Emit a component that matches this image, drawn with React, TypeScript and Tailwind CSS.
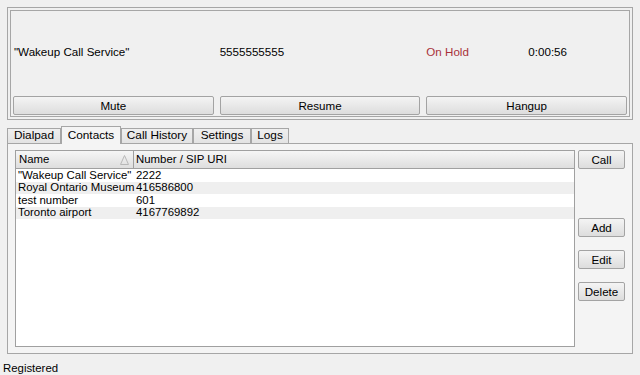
const CONTACTS = [
  { name: '"Wakeup Call Service"', number: "2222" },
  { name: "Royal Ontario Museum", number: "416586800" },
  { name: "test number", number: "601" },
  { name: "Toronto airport", number: "4167769892" },
];

const TABS = [
  { label: "Dialpad", w: "w-[54px]" },
  { label: "Contacts", w: "w-[60px]", active: true },
  { label: "Call History", w: "w-[72px]" },
  { label: "Settings", w: "w-[58px]" },
  { label: "Logs", w: "w-[38px]" },
];

function Btn({ children, className = "" }: { children: React.ReactNode; className?: string }) {
  return (
    <button
      className={
        "h-[19px] flex items-center justify-center border border-[#a3a3a3] rounded-[2px] bg-gradient-to-b from-[#f4f4f4] to-[#dddddd] text-[11.6px] leading-none text-black " +
        className
      }
    >
      {children}
    </button>
  );
}

export default function App() {
  return (
    <div className="w-[640px] h-[375px] bg-[#f0f0f0] flex flex-col font-['Liberation_Sans',Arial,sans-serif] text-[11.4px] text-black overflow-hidden">
      {/* Active call panel */}
      <div className="ml-[7px] mt-[7px] w-[626px] h-[113px] border border-[#a6a6a6] p-[2px] shrink-0">
        <div className="h-full border border-[#a6a6a6] flex flex-col px-[2px] pb-[1px]">
          <div className="grid grid-cols-3 gap-[6px] mt-[33px] leading-[15px] text-[11.6px]">
            <div className="pl-[1px]">"Wakeup Call Service"</div>
            <div>5555555555</div>
            <div className="flex">
              <div className="w-[102px] text-[#a8303a]">On Hold</div>
              <div>0:00:56</div>
            </div>
          </div>
          <div className="grid grid-cols-3 gap-[6px] mt-auto">
            <Btn>Mute</Btn>
            <Btn>Resume</Btn>
            <Btn>Hangup</Btn>
          </div>
        </div>
      </div>

      {/* Tabs */}
      <div className="ml-[7px] mt-[6px] h-[17px] flex items-end shrink-0 relative z-10 text-[11.8px]">
        {TABS.map((t) =>
          t.active ? (
            <div
              key={t.label}
              className={`${t.w} h-[18px] -mb-[1px] border border-b-0 border-[#a6a6a6] bg-[#f4f4f4] flex items-center justify-center leading-none`}
            >
              {t.label}
            </div>
          ) : (
            <div
              key={t.label}
              className={`${t.w} h-[15px] border border-b-0 border-[#a6a6a6] bg-gradient-to-b from-[#efefef] to-[#e3e3e3] flex items-center justify-center leading-none`}
            >
              {t.label}
            </div>
          )
        )}
      </div>

      {/* Tab pane */}
      <div className="ml-[7px] w-[626px] h-[211px] border border-[#a6a6a6] bg-[#f4f4f4] flex pl-[7px] pt-[6px] shrink-0">
        <div className="w-[560px] h-[197px] border border-[#a0a0a0] bg-white flex flex-col">
          <div className="h-[18px] flex border-b border-[#a0a0a0] bg-gradient-to-b from-[#f6f6f6] to-[#dedede]">
            <div className="w-[118px] border-r border-[#a0a0a0] flex items-center justify-between pl-[3px] pr-[4px]">
              <span>Name</span>
              <svg width="9" height="10" viewBox="0 0 9 10">
                <polygon points="4.5,0.5 8.5,9.5 0.5,9.5" fill="none" stroke="#b8b8b8" strokeWidth="1" />
              </svg>
            </div>
            <div className="flex items-center pl-[2px]">Number / SIP URI</div>
          </div>
          {CONTACTS.map((c, i) => (
            <div
              key={c.name}
              className={`h-[12.5px] flex items-center leading-none ${i % 2 === 1 ? "bg-[#efefef]" : "bg-white"}`}
            >
              <div className="w-[119px] pl-[2px] whitespace-nowrap">{c.name}</div>
              <div className="pl-[1px]">{c.number}</div>
            </div>
          ))}
        </div>
        <div className="ml-[3px] w-[47px] flex flex-col">
          <Btn>Call</Btn>
          <Btn className="mt-[49px]">Add</Btn>
          <Btn className="mt-[13px]">Edit</Btn>
          <Btn className="mt-[13px]">Delete</Btn>
        </div>
      </div>

      {/* Status bar */}
      <div className="mt-[7px] pl-[3px] leading-[15px]">Registered</div>
    </div>
  );
}
